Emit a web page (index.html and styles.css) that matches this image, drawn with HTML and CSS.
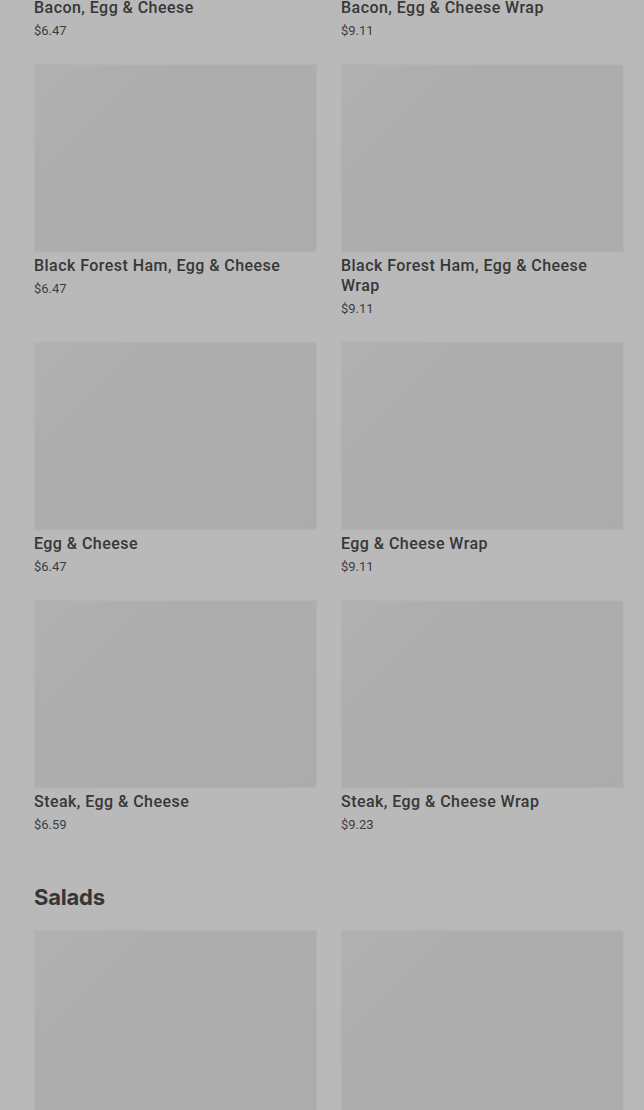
FILE: index.html
```html
<!DOCTYPE html>
<html lang="en">
<head>
  <meta charset="UTF-8">
  <meta name="viewport" content="width=device-width, initial-scale=1.0">
  <title>Menu</title>
  <link rel="stylesheet" href="styles.css">
</head>
<body>
  <main class="menu">
    <section class="category">
      <div class="items">
        <a class="item" href="#">
          <div class="thumb"></div>
          <h3>Bacon, Egg &amp; Cheese</h3>
          <p class="price">$6.47</p>
        </a>
        <a class="item" href="#">
          <div class="thumb"></div>
          <h3>Bacon, Egg &amp; Cheese Wrap</h3>
          <p class="price">$9.11</p>
        </a>
        <a class="item" href="#">
          <div class="thumb"></div>
          <h3>Black Forest Ham, Egg &amp; Cheese</h3>
          <p class="price">$6.47</p>
        </a>
        <a class="item" href="#">
          <div class="thumb"></div>
          <h3>Black Forest Ham, Egg &amp; Cheese Wrap</h3>
          <p class="price">$9.11</p>
        </a>
        <a class="item" href="#">
          <div class="thumb"></div>
          <h3>Egg &amp; Cheese</h3>
          <p class="price">$6.47</p>
        </a>
        <a class="item" href="#">
          <div class="thumb"></div>
          <h3>Egg &amp; Cheese Wrap</h3>
          <p class="price">$9.11</p>
        </a>
        <a class="item" href="#">
          <div class="thumb"></div>
          <h3>Steak, Egg &amp; Cheese</h3>
          <p class="price">$6.59</p>
        </a>
        <a class="item" href="#">
          <div class="thumb"></div>
          <h3>Steak, Egg &amp; Cheese Wrap</h3>
          <p class="price">$9.23</p>
        </a>
      </div>
    </section>

    <section class="category">
      <h2>Salads</h2>
      <div class="items">
        <a class="item" href="#">
          <div class="thumb"></div>
        </a>
        <a class="item" href="#">
          <div class="thumb"></div>
        </a>
      </div>
    </section>
  </main>
</body>
</html>
```

FILE: styles.css
```css
* {
  box-sizing: border-box;
  margin: 0;
  padding: 0;
}

html,
body {
  background-color: #b9b9b9;
  overflow: hidden;
}

body {
  font-family: Roboto, "Liberation Sans", sans-serif;
  color: #373737;
}

.menu {
  margin-top: -194px;
  padding: 0 20px 0 34px;
}

.category h2 {
  font-family: Inter, Roboto, sans-serif;
  font-size: 22px;
  font-weight: 700;
  line-height: 28px;
  letter-spacing: -0.2px;
  margin-top: 49px;
  margin-bottom: 19px;
  color: #363636;
}

.items {
  display: grid;
  grid-template-columns: repeat(2, 1fr);
  gap: 24px;
  align-items: start;
}

.item {
  display: block;
  text-decoration: none;
  color: inherit;
}

.thumb {
  height: 188px;
  background: linear-gradient(135deg, #b1b1b1 0%, #adadad 30%, #acacac 100%);
  border: 1px solid #b4b4b4;
  box-shadow: 0 0 2px rgba(0, 0, 0, 0.04);
}

.item h3 {
  font-size: 16px;
  font-weight: 500;
  line-height: 20px;
  letter-spacing: 0.45px;
  margin-top: 4px;
  padding-right: 20px;
}

.price {
  font-size: 13px;
  line-height: 18px;
  margin-top: 4px;
  color: #3d3d3d;
}
```
